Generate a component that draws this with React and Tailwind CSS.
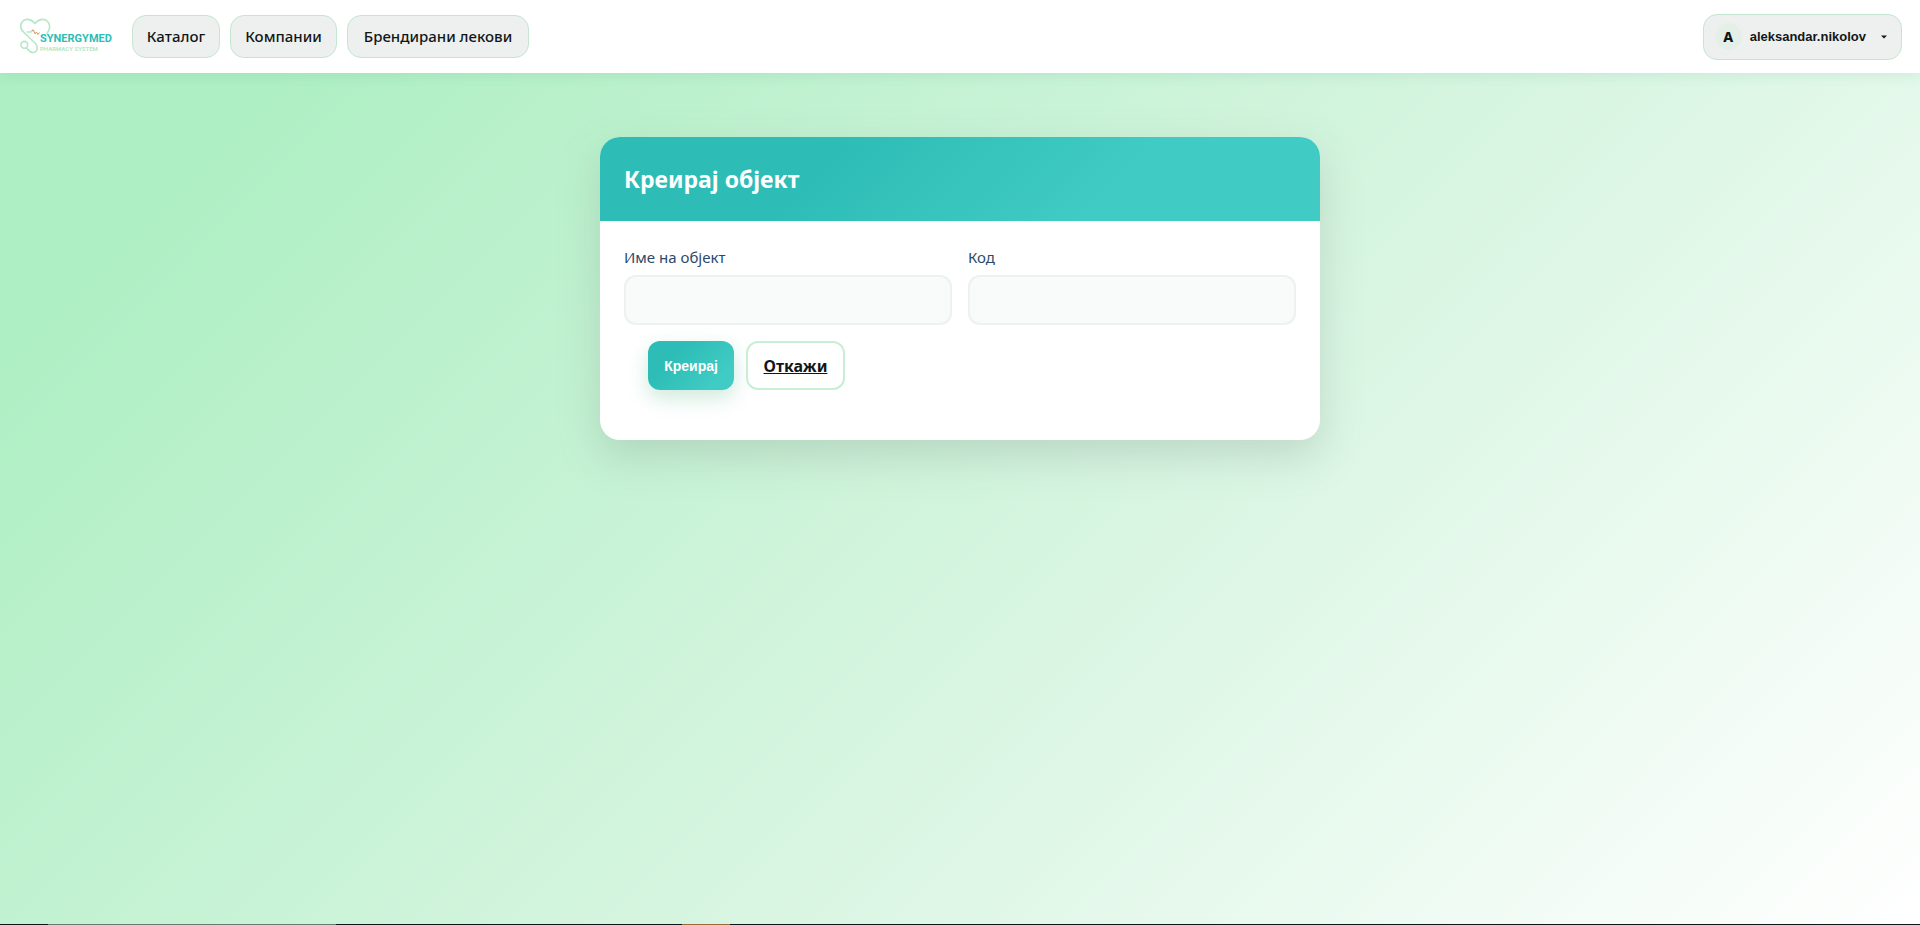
import React, { useState } from 'react';

const NAV_LINKS = [
  { label: 'Каталог', href: '#catalog', width: 'w-[88px]' },
  { label: 'Компании', href: '#companies', width: 'w-[107px]' },
  { label: 'Брендирани лекови', href: '#branded', width: 'w-[182px]' },
];

function Logo() {
  return (
    <svg width="96" height="40" viewBox="0 0 96 40" role="img" aria-label="SynergyMed">
      <g fill="none" stroke="#b5e8c8" strokeWidth="1.6" strokeLinecap="round" strokeLinejoin="round">
        <path d="M27 16.500 C30 13 30.500 8 28 5 C25 1 19 1.500 15 6.500 C11 1.500 5 1 2 5 C-0.500 9 1 13 4.500 16 L15.500 26.500 C18.500 30 17.500 35 13.500 35.500 C10 36 8.500 33 6.500 31" />
        <circle cx="4.300" cy="27.800" r="3.400" />
        <path d="M7 15 H11 L12.500 13" />
      </g>
      <path d="M12 14 L13.500 13 L15 17 L16.500 15 L18 17.500 L19.500 15.500" fill="none" stroke="#d99a66" strokeWidth="1" />
      <text x="20" y="25" fill="#2dbdb6" fontFamily="Roboto, sans-serif" fontSize="11" fontWeight="700">SYNERGYMED</text>
      <text x="20" y="34" fill="#b5e8c8" fontFamily="Roboto, sans-serif" fontSize="6" fontWeight="700">PHARMACY SYSTEM</text>
    </svg>
  );
}

function Field({ id, label, value, onChange }) {
  return (
    <div className="flex-1">
      <label htmlFor={id} className="block text-[15px] leading-6 text-[#2c4a68]">{label}</label>
      <input
        id={id}
        type="text"
        value={value}
        onChange={e => onChange(e.target.value)}
        className="mt-1.5 block h-[50px] w-full rounded-xl border-2 border-[#edf1f0] bg-[#f8fbfa] px-4 text-base focus:border-[#2dbdb6] focus:outline-none"
      />
    </div>
  );
}

export default function App() {
  const [name, setName] = useState('');
  const [code, setCode] = useState('');

  return (
    <div className="flex min-h-screen flex-col bg-white font-['Noto_Sans','Open_Sans',sans-serif] text-[#111718]">
      <header className="relative flex h-[73px] items-center justify-between bg-white pr-[18px] pl-5 shadow-[0_2px_12px_rgba(45,140,110,0.12)]">
        <div className="flex items-center gap-4">
          <a href="#home"><Logo /></a>
          <nav className="flex gap-2.5">
            {NAV_LINKS.map(link => (
              <a
                key={link.href}
                href={link.href}
                className={`flex h-[43px] items-center justify-center rounded-[14px] border border-[#c3e6cf] bg-[#eef0ef] text-[15px] font-medium whitespace-nowrap ${link.width}`}
              >
                {link.label}
              </a>
            ))}
          </nav>
        </div>
        <button
          type="button"
          className="flex h-[46px] items-center rounded-[14px] border border-[#c3e6cf] bg-[#eef0ef] pr-3.5 pl-[11px] font-['Liberation_Sans',Arial,sans-serif] text-[13px] font-bold"
        >
          <span className="flex size-[27px] items-center justify-center rounded-full bg-[#e4efe8] font-['Noto_Sans',sans-serif] text-sm font-extrabold">A</span>
          <span className="ml-2">aleksandar.nikolov</span>
          <svg className="ml-[15px]" width="6" height="4" viewBox="0 0 6 4" aria-hidden="true">
            <path d="M0 0.500 H6 L3 3.500 Z" fill="currentColor" />
          </svg>
        </button>
      </header>

      <main className="flex-1 bg-[linear-gradient(135deg,#aeefc3_10%,#d6f5e0_55%,#ffffff_100%)] px-6 pt-16">
        <section className="mx-auto max-w-[720px] overflow-hidden rounded-[20px] bg-white shadow-[0_16px_40px_rgba(130,150,140,0.3)]">
          <h1 className="flex h-[84px] items-center bg-[linear-gradient(135deg,#2dbdb6_30%,#40cbc4_70%)] px-6 text-[23px] leading-8 font-bold text-white">
            Креирај објект
          </h1>
          <form className="px-6 pt-6 pb-[50px]" onSubmit={e => e.preventDefault()}>
            <div className="flex gap-4">
              <Field id="name" label="Име на објект" value={name} onChange={setName} />
              <Field id="code" label="Код" value={code} onChange={setCode} />
            </div>
            <div className="mt-4 flex gap-3 px-6">
              <button
                type="submit"
                className="h-[49px] w-[86px] rounded-xl bg-[linear-gradient(135deg,#2dbdb6_30%,#40cbc4_80%)] font-['Liberation_Sans',Arial,sans-serif] text-sm font-bold text-white shadow-[0_8px_20px_rgba(60,170,120,0.25)]"
              >
                Креирај
              </button>
              <a
                href="#cancel"
                className="flex h-[49px] w-[99px] items-center justify-center rounded-xl border-2 border-[#c8eed4] bg-white text-base font-bold underline"
              >
                Откажи
              </a>
            </div>
          </form>
        </section>
      </main>

      <footer className="flex h-px bg-[#10151c]">
        <div className="ml-12 w-72 bg-[#667a70]" />
        <div className="ml-[346px] w-12 bg-[#9a6a3a]" />
      </footer>
    </div>
  );
}
